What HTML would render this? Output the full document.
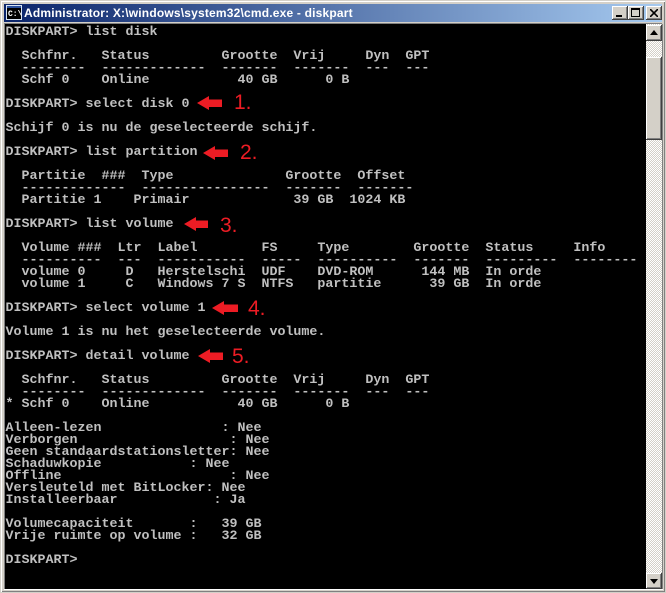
<!DOCTYPE html>
<html><head><meta charset="utf-8"><style>
html,body{margin:0;padding:0;background:#d4d0c8}
body{width:666px;height:593px;position:relative;overflow:hidden}
div,pre,svg{position:absolute}
.b{background:#d4d0c8;box-shadow:inset -1px -1px 0 #404040,inset 1px 1px 0 #fff,inset -2px -2px 0 #808080}
pre{margin:0;left:5.5px;top:27px;font:bold 13.33px/12px "Liberation Mono",monospace;color:#c0c0c0;letter-spacing:0}
.n{color:#ed1c24;font:21px/21px "Liberation Sans",sans-serif}
</style></head><body>
<div style="left:1px;top:1px;width:664px;height:591px;background:#d4d0c8;box-shadow:inset 1px 1px 0 #fff,inset -1px -1px 0 #808080"></div>
<div style="left:4px;top:4px;width:658px;height:18px;background:linear-gradient(90deg,#0a246a,#a6caf0)"></div>
<svg style="left:6px;top:5px" width="16" height="16"><rect x=".5" y=".5" width="15" height="14" fill="#000" stroke="#d8e4f4"/><rect x="1" y="1" width="14" height="2" fill="#2a4f9a"/><text x="2" y="11" font-family="Liberation Mono" font-size="8" font-weight="bold" fill="#fff">C:\_</text></svg>
<div style="left:24px;top:5px;height:16px;font:bold 12px/16px 'Liberation Sans',sans-serif;color:#fff;white-space:pre;letter-spacing:.19px">Administrator: X:\windows\system32\cmd.exe - diskpart</div>
<div class="b" style="left:612px;top:6px;width:16px;height:14px"><div style="left:4px;top:9px;width:6px;height:2px;background:#000"></div></div>
<div class="b" style="left:628px;top:6px;width:16px;height:14px"><div style="left:3px;top:2px;width:9px;height:9px;box-sizing:border-box;border:1px solid #000;border-top-width:2px"></div></div>
<div class="b" style="left:646px;top:6px;width:16px;height:14px"><svg style="left:4px;top:3px" width="8" height="8"><path d="M0 0L8 8M8 0L0 8" stroke="#000" stroke-width="1.6"/></svg></div>
<div style="left:4px;top:22px;width:658px;height:2px;background:#d4d0c8"></div>
<div style="left:4px;top:23px;width:658px;height:1px;background:#808080"></div>
<div style="left:4px;top:24px;width:1px;height:565px;background:#808080"></div>
<div style="left:5px;top:24px;width:641px;height:565px;background:#000"></div>
<div style="left:646px;top:24px;width:16px;height:565px;background-color:#fff;background-image:conic-gradient(#d4d0c8 25%,#fff 0 50%,#d4d0c8 0 75%,#fff 0);background-size:2px 2px"></div>
<div style="left:662px;top:24px;width:1px;height:565px;background:#808080"></div>
<div style="left:4px;top:589px;width:659px;height:1px;background:#fff"></div>
<div class="b" style="left:646px;top:25px;width:16px;height:16px"><svg style="left:4px;top:5px" width="8" height="5"><path d="M4 0L8 5H0Z" fill="#000"/></svg></div>
<div class="b" style="left:646px;top:57px;width:16px;height:83px"></div>
<div class="b" style="left:646px;top:573px;width:16px;height:16px"><svg style="left:4px;top:6px" width="8" height="5"><path d="M0 0H8L4 5Z" fill="#000"/></svg></div>
<pre>DISKPART&gt; list disk

  Schfnr.   Status         Grootte  Vrij     Dyn  GPT
  --------  -------------  -------  -------  ---  ---
  Schf 0    Online           40 GB      0 B

DISKPART&gt; select disk 0

Schijf 0 is nu de geselecteerde schijf.

DISKPART&gt; list partition

  Partitie  ###  Type              Grootte  Offset
  -------------  ----------------  -------  -------
  Partitie 1    Primair             39 GB  1024 KB

DISKPART&gt; list volume

  Volume ###  Ltr  Label        FS     Type        Grootte  Status     Info
  ----------  ---  -----------  -----  ----------  -------  ---------  --------
  volume 0     D   Herstelschi  UDF    DVD-ROM      144 MB  In orde
  volume 1     C   Windows 7 S  NTFS   partitie      39 GB  In orde

DISKPART&gt; select volume 1

Volume 1 is nu het geselecteerde volume.

DISKPART&gt; detail volume

  Schfnr.   Status         Grootte  Vrij     Dyn  GPT
  --------  -------------  -------  -------  ---  ---
* Schf 0    Online           40 GB      0 B

Alleen-lezen               : Nee
Verborgen                   : Nee
Geen standaardstationsletter: Nee
Schaduwkopie           : Nee
Offline                     : Nee
Versleuteld met BitLocker: Nee
Installeerbaar            : Ja

Volumecapaciteit       :   39 GB
Vrije ruimte op volume :   32 GB

DISKPART&gt;</pre>
<svg style="left:0;top:0" width="666" height="593"><g fill="#ed1c24">
<path d="M197 103L209 96V99.500H222V107H209V110Z"/>
<path d="M203 153L215 146V149.500H228V157H215V160Z"/>
<path d="M184 224L196 217V220.500H208V228H196V231Z"/>
<path d="M212 308L224 301V304.500H238V312H224V315Z"/>
<path d="M198 356L210 349V352.500H223V360H210V363Z"/>
</g></svg>
<div class="n" style="left:234px;top:92px">1.</div>
<div class="n" style="left:240px;top:142px">2.</div>
<div class="n" style="left:220px;top:215px">3.</div>
<div class="n" style="left:248px;top:298px">4.</div>
<div class="n" style="left:232px;top:346px">5.</div>
</body></html>
